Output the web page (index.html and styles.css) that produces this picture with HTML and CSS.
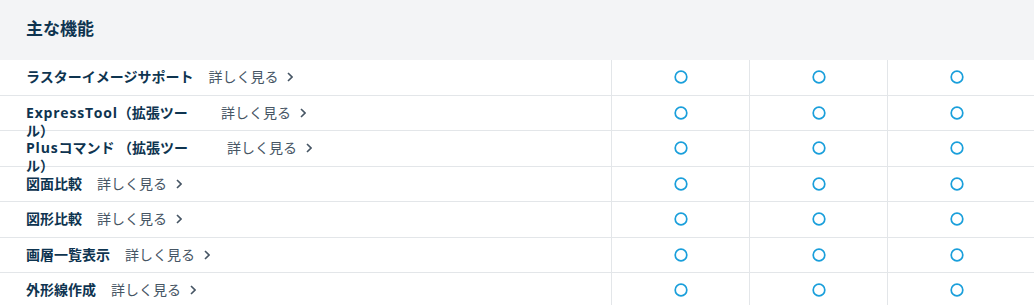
FILE: index.html
```html
<!DOCTYPE html>
<html lang="ja">
<head>
<meta charset="utf-8">
<title>主な機能</title>
<link rel="stylesheet" href="styles.css">
</head>
<body>
<section class="features">
  <header class="features__head">
    <h2 class="features__title">主な機能</h2>
  </header>
  <div class="features__body">
    <div class="row">
      <div class="cell cell--name">
        <span class="name">ラスターイメージサポート</span>
        <a class="more" href="#">詳しく見る<svg class="chev" viewBox="0 0 6 10" width="6" height="10"><path d="M1 1l4 4-4 4" /></svg></a>
      </div>
      <div class="cell cell--mark"><svg class="mark" viewBox="0 0 14 14" width="14" height="14"><circle cx="7" cy="7" r="5.8" /></svg></div>
      <div class="cell cell--mark"><svg class="mark" viewBox="0 0 14 14" width="14" height="14"><circle cx="7" cy="7" r="5.8" /></svg></div>
      <div class="cell cell--mark"><svg class="mark" viewBox="0 0 14 14" width="14" height="14"><circle cx="7" cy="7" r="5.8" /></svg></div>
      <div class="cell cell--pad"></div>
    </div>
    <div class="row">
      <div class="cell cell--name">
        <span class="name"><span class="latin">ExpressTool</span>（拡張ツール）</span>
        <a class="more more--mid" href="#">詳しく見る<svg class="chev" viewBox="0 0 6 10" width="6" height="10"><path d="M1 1l4 4-4 4" /></svg></a>
      </div>
      <div class="cell cell--mark"><svg class="mark" viewBox="0 0 14 14" width="14" height="14"><circle cx="7" cy="7" r="5.8" /></svg></div>
      <div class="cell cell--mark"><svg class="mark" viewBox="0 0 14 14" width="14" height="14"><circle cx="7" cy="7" r="5.8" /></svg></div>
      <div class="cell cell--mark"><svg class="mark" viewBox="0 0 14 14" width="14" height="14"><circle cx="7" cy="7" r="5.8" /></svg></div>
      <div class="cell cell--pad"></div>
    </div>
    <div class="row">
      <div class="cell cell--name">
        <span class="name"><span class="latin">Plus</span>コマンド （拡張ツール）</span>
        <a class="more more--far" href="#">詳しく見る<svg class="chev" viewBox="0 0 6 10" width="6" height="10"><path d="M1 1l4 4-4 4" /></svg></a>
      </div>
      <div class="cell cell--mark"><svg class="mark" viewBox="0 0 14 14" width="14" height="14"><circle cx="7" cy="7" r="5.8" /></svg></div>
      <div class="cell cell--mark"><svg class="mark" viewBox="0 0 14 14" width="14" height="14"><circle cx="7" cy="7" r="5.8" /></svg></div>
      <div class="cell cell--mark"><svg class="mark" viewBox="0 0 14 14" width="14" height="14"><circle cx="7" cy="7" r="5.8" /></svg></div>
      <div class="cell cell--pad"></div>
    </div>
    <div class="row">
      <div class="cell cell--name">
        <span class="name">図面比較</span>
        <a class="more" href="#">詳しく見る<svg class="chev" viewBox="0 0 6 10" width="6" height="10"><path d="M1 1l4 4-4 4" /></svg></a>
      </div>
      <div class="cell cell--mark"><svg class="mark" viewBox="0 0 14 14" width="14" height="14"><circle cx="7" cy="7" r="5.8" /></svg></div>
      <div class="cell cell--mark"><svg class="mark" viewBox="0 0 14 14" width="14" height="14"><circle cx="7" cy="7" r="5.8" /></svg></div>
      <div class="cell cell--mark"><svg class="mark" viewBox="0 0 14 14" width="14" height="14"><circle cx="7" cy="7" r="5.8" /></svg></div>
      <div class="cell cell--pad"></div>
    </div>
    <div class="row">
      <div class="cell cell--name">
        <span class="name">図形比較</span>
        <a class="more" href="#">詳しく見る<svg class="chev" viewBox="0 0 6 10" width="6" height="10"><path d="M1 1l4 4-4 4" /></svg></a>
      </div>
      <div class="cell cell--mark"><svg class="mark" viewBox="0 0 14 14" width="14" height="14"><circle cx="7" cy="7" r="5.8" /></svg></div>
      <div class="cell cell--mark"><svg class="mark" viewBox="0 0 14 14" width="14" height="14"><circle cx="7" cy="7" r="5.8" /></svg></div>
      <div class="cell cell--mark"><svg class="mark" viewBox="0 0 14 14" width="14" height="14"><circle cx="7" cy="7" r="5.8" /></svg></div>
      <div class="cell cell--pad"></div>
    </div>
    <div class="row">
      <div class="cell cell--name">
        <span class="name">画層一覧表示</span>
        <a class="more" href="#">詳しく見る<svg class="chev" viewBox="0 0 6 10" width="6" height="10"><path d="M1 1l4 4-4 4" /></svg></a>
      </div>
      <div class="cell cell--mark"><svg class="mark" viewBox="0 0 14 14" width="14" height="14"><circle cx="7" cy="7" r="5.8" /></svg></div>
      <div class="cell cell--mark"><svg class="mark" viewBox="0 0 14 14" width="14" height="14"><circle cx="7" cy="7" r="5.8" /></svg></div>
      <div class="cell cell--mark"><svg class="mark" viewBox="0 0 14 14" width="14" height="14"><circle cx="7" cy="7" r="5.8" /></svg></div>
      <div class="cell cell--pad"></div>
    </div>
    <div class="row">
      <div class="cell cell--name">
        <span class="name">外形線作成</span>
        <a class="more" href="#">詳しく見る<svg class="chev" viewBox="0 0 6 10" width="6" height="10"><path d="M1 1l4 4-4 4" /></svg></a>
      </div>
      <div class="cell cell--mark"><svg class="mark" viewBox="0 0 14 14" width="14" height="14"><circle cx="7" cy="7" r="5.8" /></svg></div>
      <div class="cell cell--mark"><svg class="mark" viewBox="0 0 14 14" width="14" height="14"><circle cx="7" cy="7" r="5.8" /></svg></div>
      <div class="cell cell--mark"><svg class="mark" viewBox="0 0 14 14" width="14" height="14"><circle cx="7" cy="7" r="5.8" /></svg></div>
      <div class="cell cell--pad"></div>
    </div>
  </div>
</section>
</body>
</html>
```

FILE: styles.css
```css
html, body {
  margin: 0;
  padding: 0;
  background: #ffffff;
}

body {
  font-family: "Open Sans", "Noto Sans CJK JP", sans-serif;
  color: #0e3450;
  overflow: hidden;
}

.features__head {
  height: 60px;
  background: #f3f4f6;
  display: flex;
  align-items: center;
  padding: 0 0 2px 26px;
  box-sizing: border-box;
}

.features__title {
  margin: 0;
  font-size: 17px;
  font-weight: 700;
  line-height: 24px;
  color: #0e3450;
}

.row {
  display: grid;
  grid-template-columns: 611px 138px 138px 138px 1fr;
  grid-template-rows: minmax(0, 1fr);
  height: 35.5px;
  box-sizing: border-box;
  border-bottom: 1px solid #e3e6e9;
}

.cell {
  min-height: 0;
}

.cell--name {
  display: flex;
  align-items: flex-start;
  padding: 8px 0 0 26px;
  min-width: 0;
}

.name {
  max-width: 168px;
  font-size: 14px;
  font-weight: 700;
  line-height: 18px;
  color: #0e3450;
}

.latin {
  letter-spacing: 0.8px;
}

.more {
  display: inline-flex;
  align-items: center;
  gap: 9px;
  margin-left: 15px;
  flex: none;
  font-size: 14px;
  line-height: 18px;
  color: #465564;
  text-decoration: none;
  white-space: nowrap;
}

.more--mid {
  margin-left: 27px;
}

.more--far {
  margin-left: 33px;
}

.chev {
  display: block;
  fill: none;
  stroke: #465564;
  stroke-width: 1.6;
}

.cell--mark {
  border-left: 1px solid #e3e6e9;
  display: flex;
  align-items: center;
  justify-content: center;
}

.mark {
  display: block;
  fill: none;
  stroke: #1a9fdb;
  stroke-width: 1.7;
}
```
